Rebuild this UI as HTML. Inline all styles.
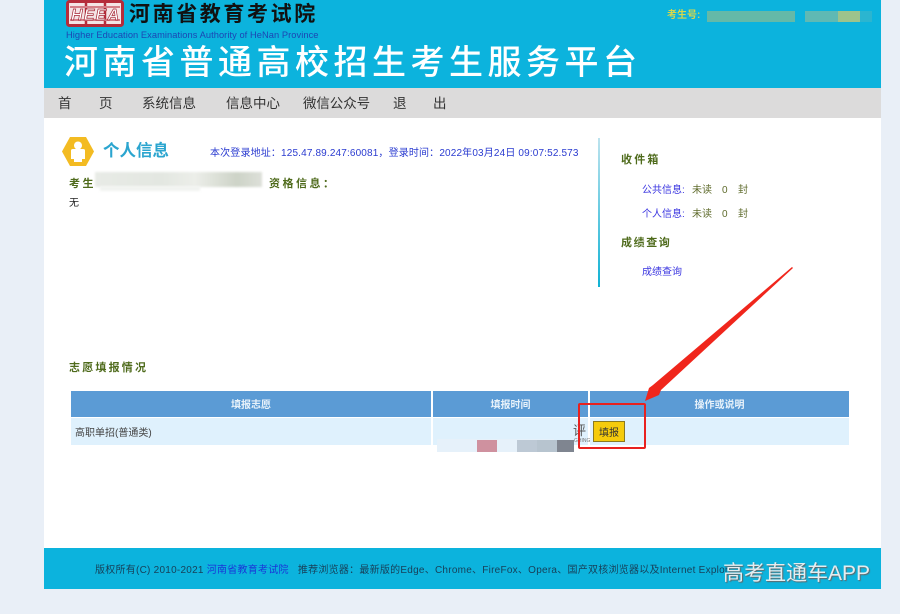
<!DOCTYPE html>
<html lang="zh-CN">
<head>
<meta charset="utf-8">
<title>河南省普通高校招生考生服务平台</title>
<style>
html,body{margin:0;padding:0;}
body{width:900px;height:614px;position:relative;overflow:hidden;background:#e9eff7;font-family:"Liberation Sans","Noto Sans CJK SC",sans-serif;}
.a{position:absolute;white-space:nowrap;}
.g{color:#4f6b1c;font-weight:bold;font-size:11px;}
.b{color:#3a35e0;font-size:10px;}
.o{color:#5f6b2c;font-size:10px;}
.th{background:#5b9bd5;color:#e8f2fa;font-size:10px;font-weight:bold;text-align:center;height:26px;line-height:30px;top:391px;}
.n{font-size:13.5px;color:#333;top:95px;line-height:17px;}
</style>
</head>
<body>
<div class="a" style="left:44px;top:0;width:837px;height:589px;background:#fff;"></div>

<!-- header -->
<div class="a" style="left:44px;top:0;width:837px;height:88px;background:#0cb3dd;"></div>
<svg class="a" style="left:66px;top:0" width="60" height="28" viewBox="0 0 60 28">
<rect x="1.5" y="1.5" width="55" height="24" rx="2" fill="#f4e4e5" stroke="#b52c3a" stroke-width="3"/>
<path d="M20 2V25M39 2V25" stroke="#b52c3a" stroke-width="2.5"/>
<path d="M4 7H54M4 20H54" stroke="#d47f88" stroke-width="2"/>
<text x="5" y="20" font-family="Liberation Sans" font-style="italic" font-weight="bold" font-size="16" fill="#fff" stroke="#a52634" stroke-width=".7" textLength="48">HEEA</text>
</svg>
<div class="a" style="left:129px;top:2px;font-size:21px;line-height:26px;font-weight:bold;color:#111;letter-spacing:2.6px;">河南省教育考试院</div>
<div class="a" style="left:66px;top:29px;font-size:9.3px;line-height:12px;color:#1c46b4;letter-spacing:.06px;">Higher Education Examinations Authority of HeNan Province</div>
<div class="a" style="left:64px;top:41px;font-size:34px;line-height:44px;color:#fff;letter-spacing:4.5px;font-weight:500;">河南省普通高校招生考生服务平台</div>
<div class="a" style="left:667px;top:9px;font-size:10px;line-height:13px;font-weight:bold;color:#d8d84a;">考生号:</div>
<div class="a" style="left:707px;top:11px;width:88px;height:11px;background:#64b9a8;"></div>
<div class="a" style="left:805px;top:11px;width:33px;height:11px;background:#5fb9b4;"></div>
<div class="a" style="left:838px;top:11px;width:22px;height:11px;background:#9dc38c;"></div>
<div class="a" style="left:860px;top:11px;width:12px;height:11px;background:#2bb5d0;"></div>

<!-- nav -->
<div class="a" style="left:44px;top:88px;width:837px;height:30px;background:#dcdbdb;"></div>
<div class="a n" style="left:58px;">首</div>
<div class="a n" style="left:99px;">页</div>
<div class="a n" style="left:142px;">系统信息</div>
<div class="a n" style="left:226px;">信息中心</div>
<div class="a n" style="left:303px;letter-spacing:-.1px;">微信公众号</div>
<div class="a n" style="left:393px;">退</div>
<div class="a n" style="left:433px;">出</div>

<!-- personal info -->
<svg class="a" style="left:62px;top:137px" width="32" height="29" viewBox="0 0 32 29">
<path d="M8 0H24L32 14.5L24 29H8L0 14.5Z" fill="#f3bb22"/>
<circle cx="16" cy="8.5" r="4" fill="#fff"/>
<path d="M9 13.5Q9 12 11 12H21Q23 12 23 13.5V22H20V25H12V22H9Z" fill="#fff"/>
</svg>
<div class="a" style="left:103px;top:140px;font-size:16.5px;line-height:23px;font-weight:bold;color:#2ba5cf;">个人信息</div>
<div class="a b" style="left:210px;top:147px;line-height:14px;color:#2a3bd0;letter-spacing:.15px;">本次登录地址：125.47.89.247:60081，登录时间：2022年03月24日 09:07:52.573</div>
<div class="a g" style="left:69px;top:177px;line-height:14px;letter-spacing:2.5px;">考生</div>
<div class="a" style="left:95px;top:172px;width:167px;height:15px;background:linear-gradient(90deg,#e8ebe6,#e3e7e1 40%,#eceee9 60%,#cdd3c7 85%,#dde0d9);filter:blur(1px);"></div>
<div class="a" style="left:100px;top:186px;width:100px;height:5px;background:#f1f3f0;filter:blur(1px);"></div>
<div class="a g" style="left:269px;top:177px;line-height:14px;letter-spacing:2.5px;">资格信息：</div>
<div class="a" style="left:69px;top:197px;font-size:10px;line-height:14px;color:#222;">无</div>

<!-- side panel -->
<div class="a" style="left:598px;top:138px;width:2px;height:149px;background:linear-gradient(#bde3ee,#10b2d4);"></div>
<div class="a g" style="left:621px;top:153px;line-height:15px;letter-spacing:2.2px;">收件箱</div>
<div class="a b" style="left:642px;top:184px;line-height:14px;">公共信息:</div>
<div class="a o" style="left:692px;top:184px;line-height:14px;">未读</div>
<div class="a o" style="left:722px;top:184px;line-height:14px;">0</div>
<div class="a o" style="left:738px;top:184px;line-height:14px;">封</div>
<div class="a b" style="left:642px;top:208px;line-height:14px;">个人信息:</div>
<div class="a o" style="left:692px;top:208px;line-height:14px;">未读</div>
<div class="a o" style="left:722px;top:208px;line-height:14px;">0</div>
<div class="a o" style="left:738px;top:208px;line-height:14px;">封</div>
<div class="a g" style="left:621px;top:236px;line-height:15px;letter-spacing:1.6px;">成绩查询</div>
<div class="a b" style="left:642px;top:266px;line-height:14px;">成绩查询</div>

<!-- table -->
<div class="a g" style="left:69px;top:361px;line-height:15px;letter-spacing:2.2px;">志愿填报情况</div>
<div class="a th" style="left:71px;width:360px;">填报志愿</div>
<div class="a th" style="left:433px;width:155px;">填报时间</div>
<div class="a th" style="left:590px;width:259px;">操作或说明</div>
<div class="a" style="left:71px;top:418px;width:360px;height:27px;background:#dff1fd;"></div>
<div class="a" style="left:433px;top:418px;width:155px;height:27px;background:#dff1fd;"></div>
<div class="a" style="left:590px;top:418px;width:259px;height:27px;background:#dff1fd;"></div>
<div class="a" style="left:75px;top:427px;font-size:10px;line-height:14px;color:#444;">高职单招(普通类)</div>
<div class="a" style="left:437px;top:439px;width:117px;height:13px;background:#e6f1fa;"></div>
<div class="a" style="left:477px;top:440px;width:20px;height:12px;background:#cf919f;"></div>
<div class="a" style="left:517px;top:440px;width:20px;height:12px;background:#bdc9d5;"></div>
<div class="a" style="left:537px;top:440px;width:20px;height:12px;background:#b7c4cf;"></div>
<div class="a" style="left:557px;top:440px;width:17px;height:12px;background:#7f8590;"></div>
<div class="a" style="left:573px;top:423px;font-size:13px;line-height:16px;color:#555;">评</div>
<div class="a" style="left:574px;top:438px;font-size:5px;line-height:7px;color:#777;">GHING</div>
<div class="a" style="left:593px;top:421px;width:30px;height:19px;border:1px solid #8a7a20;background:#f5cb0c;color:#333;font-size:10px;line-height:24px;text-align:center;">填报</div>

<!-- annotation -->
<div class="a" style="left:578px;top:403px;width:64px;height:42px;border:2px solid #e8211f;border-radius:2px;"></div>
<svg class="a" style="left:640px;top:265px" width="156" height="140" viewBox="0 0 156 140">
<path d="M153 3L21 125L19 130L5 136L9 123L13 120L152 2Z" fill="#f0261c"/>
</svg>

<!-- footer -->
<div class="a" style="left:44px;top:548px;width:837px;height:41px;background:#0cb3dd;"></div>
<div class="a" style="left:95px;top:564px;font-size:10px;line-height:14px;color:#173f58;letter-spacing:.25px;">版权所有(C) 2010-2021 <span style="color:#1a35d8;">河南省教育考试院</span> &nbsp; 推荐浏览器：最新版的Edge、Chrome、FireFox、Opera、国产双核浏览器以及Internet Explor</div>
<div class="a" style="left:723px;top:561px;font-size:21px;line-height:26px;color:#e4edf0;text-shadow:1px 1px 1px #666;">高考直通车APP</div>
</body>
</html>
